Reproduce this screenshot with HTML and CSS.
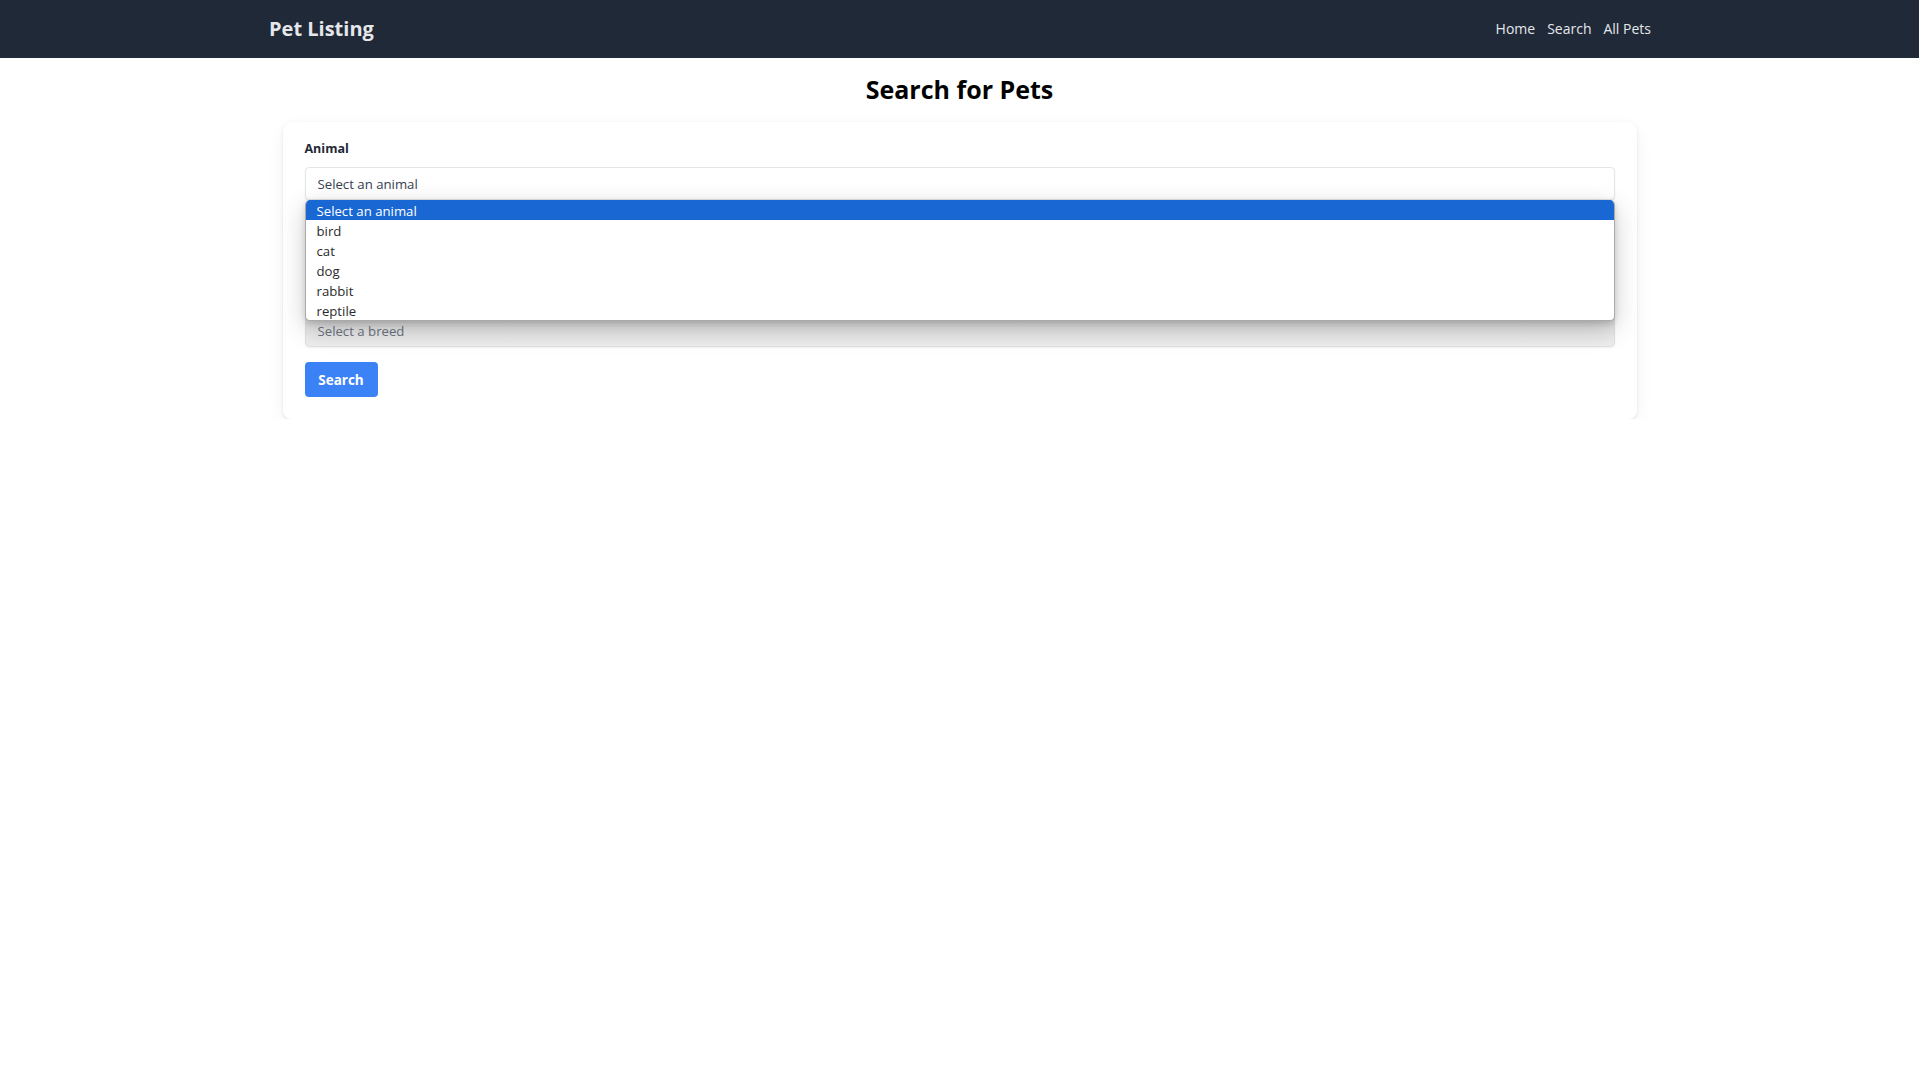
FILE: index.html
```html
<!DOCTYPE html>
<html lang="en">
<head>
<meta charset="utf-8">
<title>Pet Listing - Search</title>
<link rel="stylesheet" href="styles.css">
</head>
<body>
<nav class="navbar">
  <div class="nav-inner">
    <a class="brand" href="#">Pet Listing</a>
    <div class="nav-links">
      <a href="#">Home</a>
      <a href="#">Search</a>
      <a href="#">All Pets</a>
    </div>
  </div>
</nav>
<main class="page">
  <h1 class="title">Search for Pets</h1>
  <form class="card">
    <div class="field">
      <label class="label" for="animal">Animal</label>
      <div class="select-wrap">
        <select id="animal" class="select">
          <option>Select an animal</option>
          <option>bird</option>
          <option>cat</option>
          <option>dog</option>
          <option>rabbit</option>
          <option>reptile</option>
        </select>
        <ul class="popup" role="listbox">
          <li class="opt active">Select an animal</li>
          <li class="opt">bird</li>
          <li class="opt">cat</li>
          <li class="opt">dog</li>
          <li class="opt">rabbit</li>
          <li class="opt">reptile</li>
        </ul>
      </div>
    </div>
    <div class="field field-breed">
      <select id="breed" class="select select-disabled" aria-label="Breed" disabled>
        <option>Select a breed</option>
      </select>
    </div>
    <button type="button" class="btn">Search</button>
  </form>
</main>
</body>
</html>
```

FILE: styles.css
```css
* { box-sizing: border-box; }
html, body { margin: 0; padding: 0; background: #ffffff; }
body { font-family: "Open Sans", "Noto Sans", sans-serif; color: #111827; }

.navbar { background: #1f2937; height: 58px; }
.nav-inner {
  max-width: 1381px;
  height: 58px;
  margin: 0 auto;
  display: flex;
  align-items: center;
  justify-content: space-between;
}
.brand {
  color: #e5e7eb;
  text-decoration: none;
  font-weight: 700;
  font-size: 20px;
  line-height: 28px;
  margin-top: -1px;
}
.nav-links { display: flex; gap: 12px; margin-right: -1px; }
.nav-links a {
  color: #e5e7eb;
  text-decoration: none;
  font-size: 14px;
  line-height: 20px;
}

.page { max-width: 1354px; margin: 0 auto; padding-top: 15px; }
.title {
  margin: 0;
  text-align: center;
  font-size: 25px;
  line-height: 32px;
  font-weight: 700;
  color: #000;
}
.card {
  margin-top: 17px;
  background: #fff;
  border-radius: 8px;
  padding: 18px 22px 22px;
  box-shadow: 0 1px 3px rgba(0,0,0,0.1), 0 6px 18px rgba(0,0,0,0.05);
}
.field { display: flex; flex-direction: column; }
.label {
  font-size: 12.5px;
  line-height: 18px;
  font-weight: 700;
  color: #1f2937;
  margin-bottom: 9px;
}
.field-breed { margin-top: 114px; }

.select-wrap { position: relative; }
.select {
  -webkit-appearance: none;
  appearance: none;
  width: 100%;
  height: 33px;
  padding: 0 11px 0 12px;
  border: 1px solid #e3e5e8;
  border-radius: 4px;
  background: #fff;
  font-family: inherit;
  font-size: 13.2px;
  color: #374151;
  box-shadow: 0 1px 2px rgba(0,0,0,0.05);
  outline: none;
}
.select-disabled {
  background: linear-gradient(#d9d9d9, #e9e9e9 60%, #eeeeee);
  border-color: #e0e0e0;
  color: #6b7280;
  opacity: 1;
}

.popup {
  position: absolute;
  left: 0;
  right: 0;
  top: 33px;
  margin: 0;
  padding: 0;
  list-style: none;
  background: #fff;
  border: 1px solid #a9a9a9;
  border-top: 0;
  border-radius: 5px;
  overflow: hidden;
  z-index: 5;
  box-shadow: 0 8px 26px rgba(0,0,0,0.2), 0 2px 6px rgba(0,0,0,0.14);
}
.opt {
  height: 20px;
  line-height: 20px;
  padding: 1px 11px 0;
  font-size: 13.2px;
  color: #2b2b2b;
}
.opt.active { background: #1967d2; color: #fff; }

.btn {
  margin-top: 15px;
  width: 73px;
  height: 35px;
  border: 0;
  border-radius: 4px;
  background: #3b82f6;
  color: #fff;
  font-family: inherit;
  font-size: 13.5px;
  font-weight: 700;
  padding: 0;
  cursor: pointer;
}
```
